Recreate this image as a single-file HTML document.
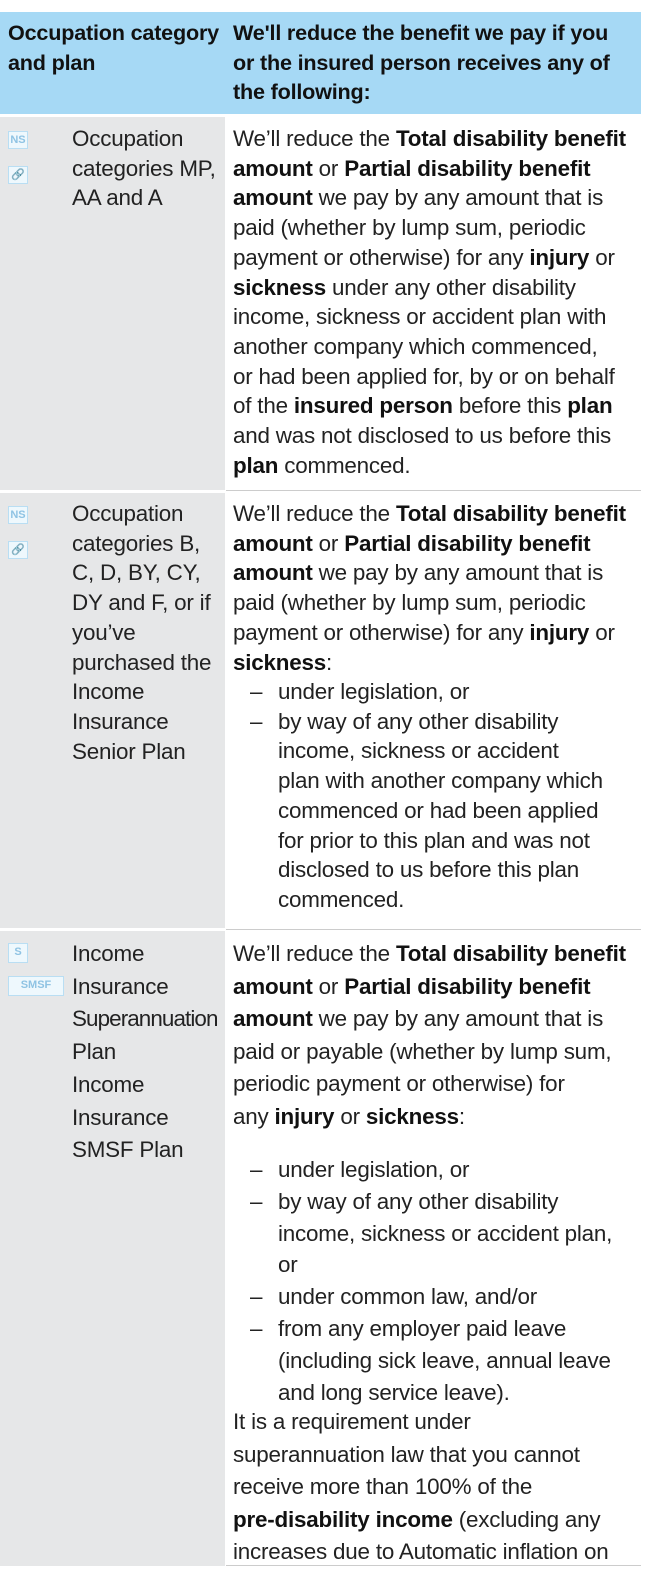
<html><head><style>
body{margin:0;width:648px;height:1581px;background:#fff;position:relative;font-family:"Liberation Sans",sans-serif;color:#222;overflow:hidden}
.t{position:absolute;font-size:22.4px;white-space:nowrap;letter-spacing:-0.2px}
b{font-weight:bold;color:#111}
.ic{position:absolute;border:1px solid #b9def3;background:#eef8fd;color:#8fc3e3;font:bold 11px "Liberation Sans",sans-serif;text-align:center;line-height:16px}
</style></head><body>
<div style="position:absolute;left:0;top:12px;width:641px;height:102px;background:#a6d9f5"></div>
<div class="t" style="left:8px;top:18px;line-height:29.5px;font-weight:bold;color:#111;font-size:21.6px">Occupation category<br>and plan</div>
<div class="t" style="left:233px;top:18px;line-height:29.5px;font-weight:bold;color:#111;font-size:21.6px">We'll reduce the benefit we pay if you<br>or the insured person receives any of<br>the following:</div>

<div style="position:absolute;left:0;top:117px;width:225px;height:1449px;background:#e6e7e8"></div>
<div style="position:absolute;left:0;top:490px;width:225px;height:3px;background:#fff"></div>
<div style="position:absolute;left:0;top:928px;width:225px;height:3px;background:#fff"></div>
<div style="position:absolute;left:226px;top:490px;width:415px;height:1px;background:#ccc"></div>
<div style="position:absolute;left:226px;top:929px;width:415px;height:1px;background:#ccc"></div>
<div style="position:absolute;left:226px;top:1565px;width:415px;height:1px;background:#ccc"></div>

<div class="ic" style="left:8px;top:131px;width:18px;height:16px">NS</div>
<div class="ic" style="left:8px;top:166px;width:18px;height:16px">&#x1F517;</div>
<div class="t" style="left:72px;top:124px;line-height:29.7px">Occupation<br>categories MP,<br>AA and A</div>
<div class="t" style="left:233px;top:124px;line-height:29.7px">We’ll reduce the <b>Total disability benefit</b><br><b>amount</b> or <b>Partial disability benefit</b><br><b>amount</b> we pay by any amount that is<br>paid (whether by lump sum, periodic<br>payment or otherwise) for any <b>injury</b> or<br><b>sickness</b> under any other disability<br>income, sickness or accident plan with<br>another company which commenced,<br>or had been applied for, by or on behalf<br>of the <b>insured person</b> before this <b>plan</b><br>and was not disclosed to us before this<br><b>plan</b> commenced.</div>

<div class="ic" style="left:8px;top:506px;width:18px;height:16px">NS</div>
<div class="ic" style="left:8px;top:541px;width:18px;height:16px">&#x1F517;</div>
<div class="t" style="left:72px;top:499px;line-height:29.7px">Occupation<br>categories B,<br>C, D, BY, CY,<br>DY and F, or if<br>you’ve<br>purchased the<br>Income<br>Insurance<br>Senior Plan</div>
<div class="t" style="left:233px;top:499px;line-height:29.7px">We’ll reduce the <b>Total disability benefit</b><br><b>amount</b> or <b>Partial disability benefit</b><br><b>amount</b> we pay by any amount that is<br>paid (whether by lump sum, periodic<br>payment or otherwise) for any <b>injury</b> or<br><b>sickness</b>:</div>
<div class="t" style="left:250px;top:677px;line-height:29.7px">–<br>–</div>
<div class="t" style="left:278px;top:677px;line-height:29.7px">under legislation, or<br>by way of any other disability<br>income, sickness or accident<br>plan with another company which<br>commenced or had been applied<br>for prior to this plan and was not<br>disclosed to us before this plan<br>commenced.</div>

<div class="ic" style="left:8px;top:943px;width:18px;height:18px">S</div>
<div class="ic" style="left:8px;top:976px;width:54px;height:18px">SMSF</div>
<div class="t" style="left:72px;top:938px;line-height:32.7px">Income<br>Insurance<br><span style="letter-spacing:-0.9px">Superannuation</span><br>Plan<br>Income<br>Insurance<br>SMSF Plan</div>
<div class="t" style="left:233px;top:938px;line-height:32.6px">We’ll reduce the <b>Total disability benefit</b><br><b>amount</b> or <b>Partial disability benefit</b><br><b>amount</b> we pay by any amount that is<br>paid or payable (whether by lump sum,<br>periodic payment or otherwise) for<br>any <b>injury</b> or <b>sickness</b>:</div>
<div class="t" style="left:250px;top:1154px;line-height:31.8px">–<br>–<br><br><br>–<br>–</div>
<div class="t" style="left:278px;top:1154px;line-height:31.8px">under legislation, or<br>by way of any other disability<br>income, sickness or accident plan,<br>or<br>under common law, and/or<br>from any employer paid leave<br>(including sick leave, annual leave<br>and long service leave).</div>
<div class="t" style="left:233px;top:1406px;line-height:32.6px">It is a requirement under<br>superannuation law that you cannot<br>receive more than 100% of the<br><b>pre-disability income</b> (excluding any<br>increases due to Automatic inflation on</div>
</body></html>
